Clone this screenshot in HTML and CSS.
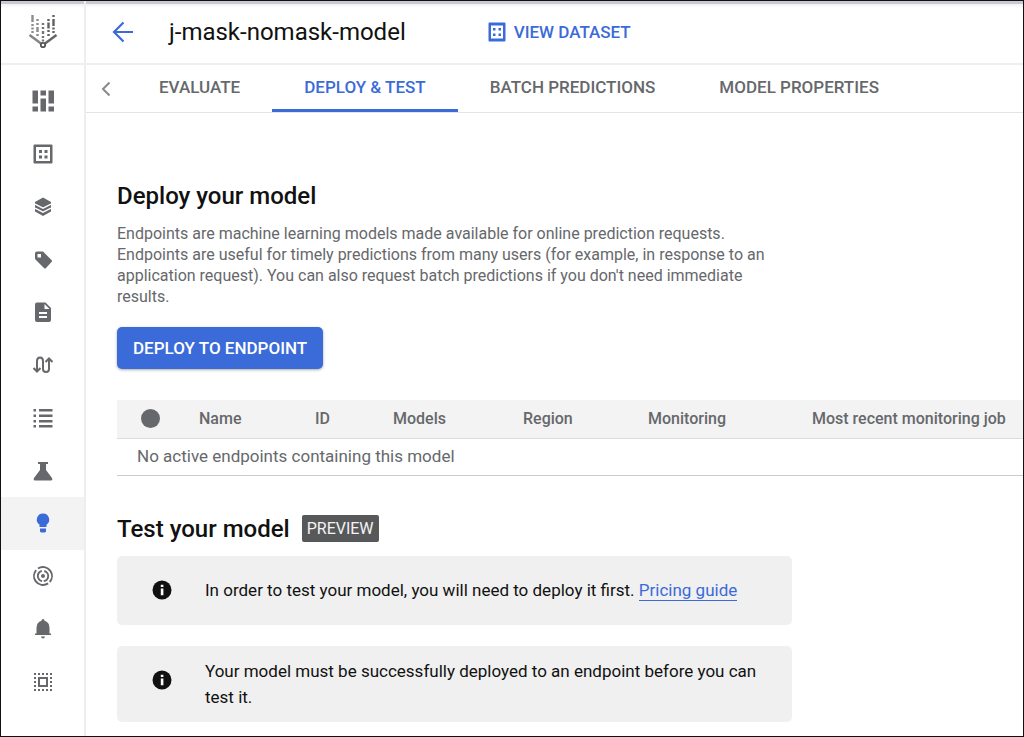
FILE: index.html
```html
<!DOCTYPE html>
<html lang="en">
<head>
<meta charset="utf-8">
<meta name="viewport" content="width=device-width, initial-scale=1">
<title>j-mask-nomask-model</title>
<link rel="stylesheet" href="styles.css">
</head>
<body>
<div class="app">
  <aside class="sidebar">
    <a class="logo" href="#" aria-label="Vertex AI">
      <svg width="30" height="34" viewBox="0 0 30 34" fill="none" stroke="#757575">
        <g stroke-width="2.400">
          <path d="M4.500 0v7M4.500 9v2M4.500 12.500v2M4.500 16v2" stroke="#8c8c8c"/>
          <path d="M9.500 4v2M9.500 8v2M9.500 12v5M9.500 19v2" stroke="#8c8c8c"/>
          <path d="M15 8v2M15 12v2M15 16v3M15 21v2M15 24.500v2"/>
          <path d="M20.500 4v2M20.500 7.500v6M20.500 15v2M20.500 19v2" stroke="#5f6164"/>
          <path d="M25.500 0v2M25.500 4v7M25.500 12.500v2M25.500 16v2" stroke="#5f6164"/>
        </g>
        <path d="M1.500 20 13 28.500" stroke-width="2.500" stroke="#858585"/>
        <path d="M28.500 20 17 28.500" stroke-width="2.500" stroke="#666"/>
        <circle cx="15" cy="30" r="2.200" stroke-width="1.800" stroke="#555"/>
      </svg>
    </a>
    <nav class="rail" aria-label="Sections">
      <a class="rail-item" href="#" aria-label="Dashboard">
        <svg width="24" height="24" viewBox="0 0 24 24" fill="currentColor"><path d="M1.500 1.500h5.500v13H1.500zM1.500 17.500h5.500v5H1.500zM9.500 1.500h5.500v5H9.500zM9.500 9.500h5.500v13H9.500zM17.500 1.500H23v13h-5.500zM17.500 17.500H23v5h-5.500z"/></svg>
      </a>
      <a class="rail-item" href="#" aria-label="Datasets">
        <svg width="24" height="24" viewBox="0 0 24 24" fill="currentColor"><path fill-rule="evenodd" d="M3.500 2.500h17q1 0 1 1v17q0 1-1 1h-17q-1 0-1-1v-17q0-1 1-1zM5 5v14h14V5z"/><path d="M8 8h3v3H8zM13.500 8h3v3h-3zM8 13.500h3v3H8zM13.500 13.500h3v3h-3z"/></svg>
      </a>
      <a class="rail-item" href="#" aria-label="Features">
        <svg width="24" height="24" viewBox="0 0 24 24"><path fill="currentColor" d="M12 2.500 20 7v9.500l-8 4.500-8-4.500V7z"/><path d="M4 9.200 12 13.200l8-4M4 13.200 12 17.200l8-4" fill="none" stroke="#fff" stroke-width="1.300"/></svg>
      </a>
      <a class="rail-item" href="#" aria-label="Labeling tasks">
        <svg width="24" height="24" viewBox="0 0 24 24" fill="currentColor"><path fill-rule="evenodd" d="M6 3.500h6l8.500 8.500q1 1 0 2L15 20q-1 1-2 0L4.500 11.500Q4 11 4 10V5.500q0-2 2-2zM6.500 6v3.500H10V6z"/></svg>
      </a>
      <a class="rail-item" href="#" aria-label="Notebooks">
        <svg width="24" height="24" viewBox="0 0 24 24"><path fill="currentColor" d="M6 2.500h8.500L20 8v12q0 2-2 2H6q-2 0-2-2V4.500q0-2 2-2z"/><path d="M13.500 4v5h5zM8 12h8v2H8zM8 16h8v2H8z" fill="#fff"/></svg>
      </a>
      <a class="rail-item" href="#" aria-label="Pipelines">
        <svg width="24" height="24" viewBox="0 0 24 24" fill="none" stroke="currentColor" stroke-width="2"><path d="M6 18V8q0-3.500 3-3.500T12 8v8q0 3 3 3t3-3V6"/><path d="m2.500 15 3.500 3.500L9.500 15M14.500 9 18 5.500 21.500 9"/></svg>
      </a>
      <a class="rail-item" href="#" aria-label="Training">
        <svg width="24" height="24" viewBox="0 0 24 24" fill="currentColor"><path d="M2.500 3H5v2.500H2.500zM8 3h13.500v2.500H8zM2.500 8.500H5V11H2.500zM8 8.500h13.500V11H8zM2.500 14H5v2.500H2.500zM8 14h13.500v2.500H8zM2.500 19H5v2.500H2.500zM8 19h13.500v2.500H8z"/></svg>
      </a>
      <a class="rail-item" href="#" aria-label="Experiments">
        <svg width="24" height="24" viewBox="0 0 24 24" fill="currentColor"><path d="M7 3h10v2h-2v6l6 8q1 2-1 2.500H4Q2 21 3 19l6-8V5H7z"/></svg>
      </a>
      <a class="rail-item rail-item-active" href="#" aria-label="Models" aria-current="page">
        <svg width="24" height="24" viewBox="0 0 24 24" fill="currentColor"><path d="M12 2.500a6.200 6.200 0 0 1 3.500 11.300V16h-7v-2.200A6.200 6.200 0 0 1 12 2.500zM9 17.500h6v3q-.5 1-1.500 1h-3q-1 0-1.500-1z"/></svg>
      </a>
      <a class="rail-item" href="#" aria-label="Endpoints">
        <svg width="24" height="24" viewBox="0 0 24 24" fill="none" stroke="currentColor" stroke-width="1.900"><circle cx="12" cy="12" r="9" stroke-dasharray="25.800 2.470" transform="rotate(55 12 12)"/><circle cx="12" cy="12" r="5.200" stroke-dasharray="13.800 2.530" transform="rotate(100 12 12)"/><circle cx="12" cy="12" r="2" fill="currentColor" stroke="none"/></svg>
      </a>
      <a class="rail-item" href="#" aria-label="Batch predictions">
        <svg width="24" height="24" viewBox="0 0 24 24" fill="currentColor"><path d="M12 2q1.500 0 1.500 1.700 5 1.500 5 7.300v5.500h1.500v1.500H4v-1.500h1.500V11q0-5.800 5-7.300Q10.500 2 12 2zM10 19.500h4q-.3 2-2 2t-2-2z"/></svg>
      </a>
      <a class="rail-item" href="#" aria-label="Metadata">
        <svg width="24" height="24" viewBox="0 0 24 24" fill="none" stroke="currentColor" stroke-width="2"><path d="M8 8h8v8H8z"/><path stroke-dasharray="2 2" d="M3 4h18M3 20h18M4 7v12M20 7v12"/></svg>
      </a>
    </nav>
  </aside>

  <div class="page">
    <header class="topbar">
      <a class="back" href="#" aria-label="Back">
        <svg width="24" height="24" viewBox="0 0 24 24" fill="none" stroke="currentColor" stroke-width="2.200"><path d="M22 12H3M12.500 2.500 3 12l9.500 9.500"/></svg>
      </a>
      <h1 class="title">j-mask-nomask-model</h1>
      <a class="view-dataset" href="#">
        <svg width="18" height="20" viewBox="0 0 18 20" fill="currentColor"><path fill-rule="evenodd" d="M1.500.500h15q1 0 1 1v17q0 1-1 1h-15q-1 0-1-1v-17q0-1 1-1zM3 3.500v13h12v-13z"/><path d="M5 6h2.500v2.500H5zM10.500 6H13v2.500h-2.500zM5 11.500h2.500V14H5zM10.500 11.500H13V14h-2.500z"/></svg>
        VIEW DATASET
      </a>
    </header>

    <nav class="tabs" aria-label="Model">
      <button class="tab-prev" type="button" aria-label="Previous tabs">
        <svg width="10" height="16" viewBox="0 0 10 16" fill="none" stroke="currentColor" stroke-width="2"><path d="M8.500 1.500 2 8l6.500 6.500"/></svg>
      </button>
      <a class="tab" href="#">EVALUATE</a>
      <a class="tab tab-active" href="#" aria-current="page">DEPLOY &amp; TEST</a>
      <a class="tab" href="#">BATCH PREDICTIONS</a>
      <a class="tab" href="#">MODEL PROPERTIES</a>
    </nav>

    <main class="content">
      <section class="deploy">
        <h2 class="heading">Deploy your model</h2>
        <p class="intro">Endpoints are machine learning models made available for online prediction requests. Endpoints are useful for timely predictions from many users (for example, in response to an application request). You can also request batch predictions if you don't need immediate results.</p>
        <button class="deploy-button" type="button">DEPLOY TO ENDPOINT</button>
        <table class="endpoints">
          <colgroup>
            <col class="col-status"><col class="col-name"><col class="col-id"><col class="col-models"><col class="col-region"><col class="col-monitoring"><col>
          </colgroup>
          <thead>
            <tr>
              <th scope="col" aria-label="Status"><span class="dot"></span></th>
              <th scope="col">Name</th>
              <th scope="col">ID</th>
              <th scope="col">Models</th>
              <th scope="col">Region</th>
              <th scope="col">Monitoring</th>
              <th scope="col">Most recent monitoring job</th>
            </tr>
          </thead>
          <tbody>
            <tr><td colspan="7">No active endpoints containing this model</td></tr>
          </tbody>
        </table>
      </section>

      <section class="test">
        <div class="heading-row">
          <h2 class="heading">Test your model</h2>
          <span class="badge">PREVIEW</span>
        </div>
        <div class="notice">
          <svg class="info" width="20" height="20" viewBox="0 0 20 20"><circle cx="10" cy="10" r="9.500" fill="#111"/><path d="M8.800 4.800h2.600v2.300H8.800zM8.800 8.500h2.600v6.800H8.800z" fill="#fff"/></svg>
          <p class="notice-text">In order to test your model, you will need to deploy it first. <a class="link" href="#">Pricing guide</a></p>
        </div>
        <div class="notice">
          <svg class="info" width="20" height="20" viewBox="0 0 20 20"><circle cx="10" cy="10" r="9.500" fill="#111"/><path d="M8.800 4.800h2.600v2.300H8.800zM8.800 8.500h2.600v6.800H8.800z" fill="#fff"/></svg>
          <p class="notice-text">Your model must be successfully deployed to an endpoint before you can test it.</p>
        </div>
      </section>
    </main>
  </div>
</div>
</body>
</html>
```
FILE: styles.css
```css
:root {
  --blue: #3b6bd9;
  --gray: #66686b;
  --line: #eeeeee;
}

* {
  box-sizing: border-box;
}

body {
  margin: 0;
  background: #fff;
  color: #111;
  font-family: Roboto, "Liberation Sans", sans-serif;
  font-size: 17px;
  line-height: 21px;
}

h1, h2, p {
  margin: 0;
}

a {
  color: inherit;
  text-decoration: none;
}

svg {
  display: block;
  flex: none;
}

.app {
  display: flex;
  min-height: 100vh;
  border: 1px solid #111;
  background: linear-gradient(#cbc9d2 0, #cbc9d2 3px, #f1f1f3 3px, #fff 7px);
}

.sidebar {
  display: flex;
  flex-direction: column;
  flex: none;
  width: 85px;
  border-right: 2px solid var(--line);
}

.logo {
  display: flex;
  align-items: center;
  justify-content: center;
  height: 64px;
  border-bottom: 2px solid var(--line);
}

.rail {
  display: grid;
  flex: 1;
  grid-auto-rows: 1fr;
  padding: 10px 0 28px;
  color: var(--gray);
}

.rail-item {
  display: flex;
  align-items: center;
  justify-content: center;
  min-height: 48px;
}

.rail-item-active {
  background: #f3f3f3;
  color: var(--blue);
}

.page {
  flex: 1;
  min-width: 0;
}

.topbar {
  display: flex;
  align-items: center;
  height: 64px;
  padding-left: 25px;
  border-bottom: 2px solid var(--line);
}

.back {
  margin-right: 34px;
  color: var(--blue);
}

.title {
  margin-right: 82px;
  font-size: 24px;
  font-weight: 400;
  line-height: 32px;
}

.view-dataset {
  display: flex;
  align-items: center;
  gap: 8px;
  color: var(--blue);
  font-weight: 500;
}

.tabs {
  display: flex;
  height: 48px;
  border-bottom: 1px solid #e4e4e4;
  color: var(--gray);
}

.tab-prev {
  width: 41px;
  padding: 0 15px;
  border: 0;
  background: none;
  color: #8a8a8a;
}

.tab {
  padding: 12px 32px 0;
  font-weight: 500;
}

.tab-active {
  border-bottom: 3px solid var(--blue);
  color: var(--blue);
}

.content {
  padding: 67px 0 14px 31px;
}

.heading {
  font-size: 24px;
  font-weight: 500;
  line-height: 32px;
}

.intro {
  max-width: 675px;
  margin-top: 11px;
  color: var(--gray);
  font-size: 16px;
}

.deploy-button {
  height: 42px;
  margin-top: 20px;
  padding: 0 16px;
  border: 0;
  border-radius: 5px;
  background: var(--blue);
  box-shadow: 0 1px 3px #0005;
  color: #fff;
  font: inherit;
  font-weight: 500;
}

.endpoints {
  width: 100%;
  margin-top: 31px;
  border-collapse: collapse;
  table-layout: fixed;
  color: var(--gray);
  text-align: left;
}

.endpoints th {
  height: 38px;
  padding: 0 0 0 24px;
  border-bottom: 1px solid #dcdcdc;
  background: #f3f3f3;
  font-size: 16px;
  font-weight: 500;
  white-space: nowrap;
}

.endpoints td {
  height: 37px;
  padding: 0 0 0 20px;
  border-bottom: 1px solid #ccc;
}

.col-status { width: 58px; }
.col-name { width: 116px; }
.col-id { width: 78px; }
.col-models { width: 130px; }
.col-region { width: 125px; }
.col-monitoring { width: 164px; }

.dot {
  display: block;
  width: 19px;
  height: 19px;
  border-radius: 50%;
  background: var(--gray);
}

.test {
  margin-top: 37px;
}

.heading-row {
  display: flex;
  align-items: center;
  gap: 12px;
}

.badge {
  padding: 3px 5px;
  border-radius: 2px;
  background: #57585a;
  color: #f4f4f4;
  font-size: 16px;
}

.notice {
  display: flex;
  align-items: flex-start;
  gap: 33px;
  max-width: 675px;
  min-height: 69px;
  margin-top: 11px;
  padding: 12px 24px;
  border-radius: 5px;
  background: #f0f0f0;
  line-height: 26px;
}

.notice + .notice {
  margin-top: 21px;
}

.info {
  margin: 12px 0 0 11px;
}

.notice-text {
  align-self: center;
}

.link {
  border-bottom: 1px solid var(--blue);
  color: var(--blue);
}
```
